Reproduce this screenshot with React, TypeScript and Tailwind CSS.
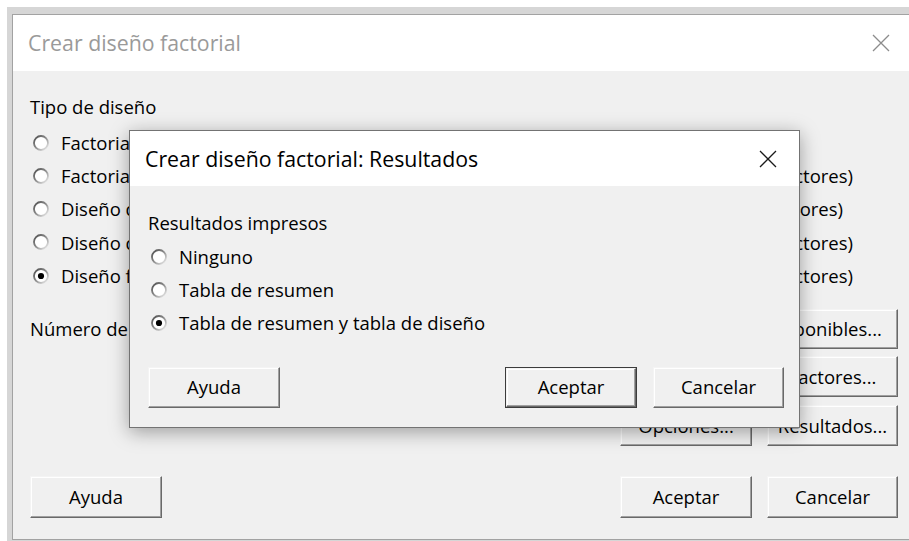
import React from 'react';

type BtnProps = { label: string; className?: string; primary?: boolean };

// classic 3D push button
function Btn({ label, className = '', primary = false }: BtnProps) {
  return (
    <div className={`${className} ${primary ? 'border border-[#3c3c3c]' : ''} box-border`}>
      <div className="h-full w-full border-t border-l border-[#f4f4f4] border-b border-r border-b-[#696969] border-r-[#696969] bg-[#f0f0f0] shadow-[inset_-1px_-1px_0_#a0a0a0,inset_1px_1px_0_#ffffff] flex items-center justify-center text-black whitespace-nowrap">
        {label}
      </div>
    </div>
  );
}

function Radio({ checked = false }: { checked?: boolean }) {
  return (
    <svg width="16" height="16" viewBox="0 0 16 16" className="shrink-0">
      <defs>
        <linearGradient id="rim" x1="0" y1="0" x2="1" y2="1">
          <stop offset="0" stopColor="#4a4a4a" />
          <stop offset="0.5" stopColor="#8e8e8e" />
          <stop offset="1" stopColor="#f4f4f4" />
        </linearGradient>
      </defs>
      <circle cx="8" cy="8" r="7" fill="#fff" stroke="url(#rim)" strokeWidth="1.8" />
      {checked && <circle cx="8" cy="8" r="3.1" fill="#000" />}
    </svg>
  );
}

function CloseX({ color, size = 18 }: { color: string; size?: number }) {
  return (
    <svg width={size} height={size} viewBox="0 0 18 18">
      <path d="M1 1 L17 17 M17 1 L1 17" stroke={color} strokeWidth="1.3" fill="none" />
    </svg>
  );
}

function Option({ label, checked }: { label: string; checked?: boolean }) {
  return (
    <div className="h-[33.25px] flex items-center whitespace-nowrap">
      <div className="ml-[3px] mr-[12px] flex">
        <Radio checked={checked} />
      </div>
      <span>{label}</span>
    </div>
  );
}

// design types with their factor range, range text ends at the row width
const designTypes = [
  { label: 'Factorial de 2 niveles (generadores predeterminados)', range: '', w: 'w-[760px]' },
  { label: 'Factorial de 2 niveles (especificar generadores)', range: '(2 a 15 factores)', w: 'w-[823px]' },
  { label: 'Diseño de parcelas divididas de 2 niveles', range: '(2 a 7 factores)', w: 'w-[813px]' },
  { label: 'Diseño de Plackett-Burman', range: '(2 a 47 factores)', w: 'w-[823px]' },
  { label: 'Diseño factorial completo general', range: '(2 a 15 factores)', w: 'w-[823px]', checked: true },
];

export default function App() {
  return (
    <div className="w-[909px] h-[541px] bg-white overflow-hidden relative font-['Open_Sans',sans-serif] text-[18.5px] text-black">
      {/* main dialog */}
      <div className="mt-[7px] ml-[7px] h-[534px] bg-[#d6d6d6] pt-[7px] pl-[5px]">
        <div className="h-[526px] box-border border-l border-t border-b border-[#a2a2a2] bg-[#f0f0f0] flex flex-col">
          <div className="h-[56px] shrink-0 bg-white flex items-center justify-between pl-[15px] pr-[19px]">
            <span className="text-[21.3px] text-[#9a9a9a]">Crear diseño factorial</span>
            <CloseX color="#8c8c8c" />
          </div>

          <div className="px-[17px] pr-[11px] flex flex-col">
            <div className="mt-[24px] h-[24px] flex items-center">Tipo de diseño</div>
            <div className="mt-[7px] flex flex-col">
              {designTypes.map((d) => (
                <div key={d.label} className={`${d.w} flex items-center justify-between`}>
                  <Option label={d.label} checked={d.checked} />
                  <span className="whitespace-nowrap">{d.range}</span>
                </div>
              ))}
            </div>

            <div className="mt-[17px] h-[40px] flex items-center justify-between">
              <div className="flex items-center gap-[10px]">
                <span>Número de factores:</span>
                <div className="w-[60px] h-[26px] bg-white border border-[#7a7a7a] flex items-center px-[6px]">2</div>
              </div>
              <Btn label="Mostrar diseños disponibles..." className="w-[290px] h-[40px]" />
            </div>
            <div className="mt-[7px] flex justify-end gap-[15px]">
              <Btn label="Diseños..." className="w-[132px] h-[41px]" />
              <Btn label="Factores..." className="w-[131px] h-[41px]" />
            </div>
            <div className="mt-[8px] flex justify-end gap-[15px]">
              <Btn label="Opciones..." className="w-[132px] h-[41px]" />
              <Btn label="Resultados..." className="w-[131px] h-[41px]" />
            </div>
            <div className="mt-[30px] flex items-center justify-between">
              <Btn label="Ayuda" className="w-[132px] h-[42px]" />
              <div className="flex gap-[15px]">
                <Btn label="Aceptar" className="w-[132px] h-[42px]" />
                <Btn label="Cancelar" className="w-[131px] h-[42px]" />
              </div>
            </div>
          </div>
        </div>
      </div>

      {/* results sub-dialog */}
      <div className="absolute left-[129px] top-[130px] w-[671px] h-[298px] box-border border border-[#737373] bg-[#f0f0f0] shadow-[0_4px_18px_rgba(0,0,0,0.35)] flex flex-col">
        <div className="h-[55px] shrink-0 bg-white flex items-center justify-between pl-[15px] pr-[22px]">
          <span className="text-[21.3px] text-black">Crear diseño factorial: Resultados</span>
          <CloseX color="#1a1a1a" />
        </div>
        <div className="pl-[18px] pr-[15px] flex flex-col">
          <div className="mt-[25px] h-[24px] flex items-center">Resultados impresos</div>
          <div className="mt-[5px] flex flex-col">
            <Option label="Ninguno" />
            <Option label="Tabla de resumen" />
            <Option label="Tabla de resumen y tabla de diseño" checked />
          </div>
          <div className="mt-[27px] flex items-center justify-between">
            <Btn label="Ayuda" className="w-[132px] h-[41px]" />
            <div className="flex gap-[16px]">
              <Btn label="Aceptar" className="w-[132px] h-[41px]" primary />
              <Btn label="Cancelar" className="w-[131px] h-[41px]" />
            </div>
          </div>
        </div>
      </div>
    </div>
  );
}
